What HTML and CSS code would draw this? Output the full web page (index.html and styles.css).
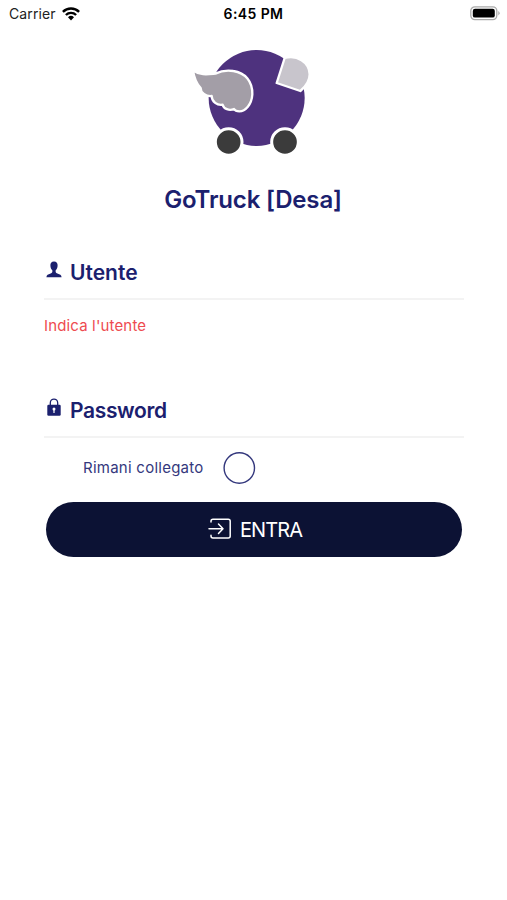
FILE: index.html
```html
<!DOCTYPE html>
<html lang="it">
<head>
    <meta charset="UTF-8">
    <meta name="viewport" content="width=device-width, initial-scale=1.0">
    <title>GoTruck</title>
    <link rel="stylesheet" href="styles.css">
</head>
<body>

    <header class="status-bar">
        <div class="carrier">
            <span>Carrier</span>
            <svg class="wifi" viewBox="0 0 18 14" width="18" height="14">
                <g fill="none" stroke="#000" stroke-width="2.4">
                    <path d="M0.9 4.9 A11.5 11.5 0 0 1 17.1 4.9"/>
                    <path d="M3.9 8 A7.2 7.2 0 0 1 14.1 8"/>
                </g>
                <path d="M6 10.2 A4.3 4.3 0 0 1 12 10.2 L9 13.4 Z" fill="#000"/>
            </svg>
        </div>
        <div class="clock">6:45 PM</div>
        <svg class="battery" viewBox="0 0 30 15" width="30" height="15">
            <rect x="0.8" y="0.8" width="26" height="12.8" rx="4" fill="#fff" stroke="#aaa" stroke-width="1.3"/>
            <rect x="2.8" y="2.8" width="22" height="8.8" rx="2.2" fill="#000"/>
            <path d="M28.3 5 Q31 7.2 28.3 9.4 Z" fill="#aaa"/>
        </svg>
    </header>

    <main class="login">
        <svg class="logo" viewBox="0 0 435 375" width="145" height="125">
            <circle cx="230" cy="174" r="144" fill="#4e327e"/>
            <!-- cappello -->
            <path d="M314 54 C350 44 388 65 389 103 C389 126 378 139 361 153 L290 129 Z" fill="#c8c5cc" stroke="#fff" stroke-width="7" stroke-linejoin="round"/>
            <!-- ala -->
            <path d="M39 91 C60 107 84 103 106 101 C124 92 142 90 160 93 C196 98 218 125 217 163 C215 194 196 214 178 214 Q166 214 162 207 C148 213 131 207 128 194 C112 197 95 185 95 168 C78 170 61 158 62 144 C50 131 42 113 39 91 Z" fill="#a39ea7" stroke="#fff" stroke-width="7" stroke-linejoin="round"/>
            <!-- ruote -->
            <circle cx="146" cy="306" r="40" fill="#3b3b3b" stroke="#fff" stroke-width="9"/>
            <circle cx="315" cy="306" r="40" fill="#3b3b3b" stroke="#fff" stroke-width="9"/>
        </svg>

        <h1 class="title">GoTruck [Desa]</h1>

        <div class="field">
            <svg class="field-icon" viewBox="0 0 16 18" width="16" height="18">
                <path d="M8 0.4 C5.4 0.4 4.2 2.2 4.4 4.8 C4.5 7 5.3 8.2 6.3 9.3 C6.6 11 6.3 11.7 4.6 12.6 C2 13.6 0.6 13.8 0.4 16.2 H15.6 C15.4 13.8 14 13.6 11.4 12.6 C9.7 11.7 9.4 11 9.7 9.3 C10.7 8.2 11.5 7 11.6 4.8 C11.8 2.2 10.6 0.4 8 0.4 Z" fill="#1b206e"/>
            </svg>
            <span class="label">Utente</span>
        </div>
        <div class="error">Indica l'utente</div>

        <div class="field">
            <svg class="field-icon icon-lock" viewBox="0 0 16 18" width="16" height="18">
                <path d="M4.3 8 V4.9 C4.3 -0.1 11.7 -0.1 11.7 4.9 V8" fill="none" stroke="#1b206e" stroke-width="1.3"/>
                <rect x="1.3" y="6.8" width="13.4" height="11" rx="1.2" fill="#1b206e"/>
                <circle cx="8" cy="10.9" r="1.5" fill="#fff"/>
                <path d="M8 11 V15" stroke="#fff" stroke-width="1.2"/>
            </svg>
            <span class="label label-password">Password</span>
        </div>

        <div class="remember">
            <span class="remember-text">Rimani collegato</span>
            <svg class="check" viewBox="0 0 33 32" width="33" height="32">
                <circle cx="16.3" cy="16" r="15.2" fill="none" stroke="#34387d" stroke-width="1.4"/>
            </svg>
        </div>

        <button class="enter" type="button">
            <svg viewBox="0 0 24 22" width="24" height="22">
                <g fill="none" stroke="#fff" stroke-width="1.5" stroke-linecap="round" stroke-linejoin="round">
                    <path d="M3 4 V3.2 Q3 1.3 5 1.3 H20.2 Q22.2 1.3 22.2 3.2 V18 Q22.2 20 20.2 20 H5 Q3 20 3 18 V17.3"/>
                    <path d="M1 10.7 H14.6 M10.5 6 L15 10.7 L10.5 15.4"/>
                </g>
            </svg>
            <span>ENTRA</span>
        </button>
    </main>

</body>
</html>
```

FILE: styles.css
```css
body {
    margin: 0;
    background-color: #fff;
    color: #1b206e;
    font-family: Inter, "Liberation Sans", sans-serif;
}
.status-bar {
    display: grid;
    grid-template-columns: 1fr auto 1fr;
    align-items: center;
    height: 27px;
    padding: 0 7px 0 9px;
    color: #000;
    font-size: 14px;
}
.carrier {
    display: flex;
    align-items: center;
    gap: 6px;
    color: #222;
    letter-spacing: 0.1px;
}
.clock {
    margin-right: 2px;
    font-weight: 600;
    letter-spacing: 0.4px;
}
.battery {
    justify-self: end;
}
.login {
    display: flex;
    flex-direction: column;
    padding: 13px 43px 0 44px;
}
.logo {
    margin-left: 136px;
}
.title {
    margin: 20px 2px 0 0;
    font-size: 24px;
    line-height: 30px;
    font-weight: 600;
    letter-spacing: -0.15px;
    text-align: center;
}
.field {
    display: flex;
    align-items: center;
    gap: 8px;
    height: 53px;
    margin-top: 30px;
    padding-left: 2px;
    border-bottom: 2px solid #f3f3f3;
}
.field-icon {
    margin-bottom: 4px;
}
.icon-lock {
    margin-bottom: 6px;
}
.label {
    padding-top: 1px;
    font-size: 21px;
    font-weight: 600;
}
.label-password {
    letter-spacing: -0.35px;
}
.error {
    height: 37px;
    margin-top: 16px;
    font-size: 15px;
    line-height: 20px;
    letter-spacing: 0.15px;
    color: #ee4b50;
}
.remember {
    display: flex;
    align-items: center;
    gap: 19px;
    margin: 14px 0 0 39px;
    font-size: 15px;
    color: #34387d;
}
.remember-text {
    padding-bottom: 1px;
    letter-spacing: 0.25px;
}
.enter {
    display: flex;
    align-items: center;
    justify-content: center;
    gap: 8px;
    height: 55px;
    margin: 18px 2px 0;
    padding: 0 0 0 2px;
    border: 0;
    border-radius: 28px;
    background-color: #0c1234;
    color: #fff;
    font-family: inherit;
    font-size: 20px;
    letter-spacing: -0.9px;
}
.enter svg {
    margin-bottom: 2px;
}
```
